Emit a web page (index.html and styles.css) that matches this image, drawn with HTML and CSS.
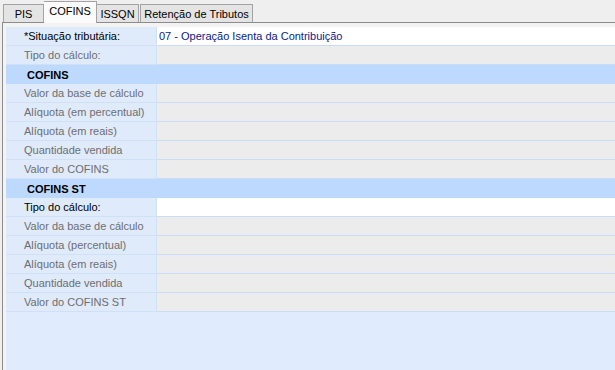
FILE: index.html
```html
<!DOCTYPE html>
<html>
<head>
<meta charset="utf-8">
<link rel="stylesheet" href="styles.css">
</head>
<body>
<div class="tabs">
  <div class="tab t-pis">PIS</div>
  <div class="tab t-cofins active">COFINS</div>
  <div class="tab t-issqn">ISSQN</div>
  <div class="tab t-ret">Retenção de Tributos</div>
</div>
<div class="panel">
  <div class="grid">
    <div class="lbl req">*Situação tributária:</div><div class="val edit">07 - Operação Isenta da Contribuição</div>
    <div class="lbl">Tipo do cálculo:</div><div class="val"></div>
    <div class="hdr">COFINS</div>
    <div class="lbl">Valor da base de cálculo</div><div class="val"></div>
    <div class="lbl">Alíquota (em percentual)</div><div class="val"></div>
    <div class="lbl">Alíquota (em reais)</div><div class="val"></div>
    <div class="lbl">Quantidade vendida</div><div class="val"></div>
    <div class="lbl">Valor do COFINS</div><div class="val"></div>
    <div class="hdr">COFINS ST</div>
    <div class="lbl req">Tipo do cálculo:</div><div class="val edit"></div>
    <div class="lbl">Valor da base de cálculo</div><div class="val"></div>
    <div class="lbl">Alíquota (percentual)</div><div class="val"></div>
    <div class="lbl">Alíquota (em reais)</div><div class="val"></div>
    <div class="lbl">Quantidade vendida</div><div class="val"></div>
    <div class="lbl">Valor do COFINS ST</div><div class="val"></div>
  </div>
</div>
</body>
</html>
```
FILE: styles.css
```css
html, body {
  margin: 0;
  padding: 0;
  height: 100%;
}
body {
  background: #efefef;
  font-family: "Liberation Sans", Arial, sans-serif;
  font-size: 11px;
  overflow: hidden;
}
.tabs {
  display: flex;
  align-items: flex-end;
  height: 22px;
  padding-left: 3px;
}
.tab {
  box-sizing: border-box;
  height: 18px;
  line-height: 18px;
  border: 1px solid #a3a3a3;
  border-bottom: none;
  background: #e4e4e4;
  color: #000;
  text-align: center;
  white-space: nowrap;
}
.t-pis { width: 41px; }
.t-cofins { width: 53px; }
.t-issqn { width: 42px; border-left: none; }
.t-ret { width: 113px; margin-left: 1px; }
.tab.active {
  height: 22px;
  line-height: 19px;
  margin-bottom: -1px;
  background: #fbfbfb;
  position: relative;
  z-index: 1;
  border-left: none;
}
.panel {
  box-sizing: border-box;
  margin-left: 2px;
  border-top: 1px solid #8c8c8c;
  border-left: 1px solid #8c8c8c;
  padding: 4px 0 0 3px;
  height: calc(100vh - 22px);
  background: #f3f3f3;
  overflow: hidden;
}
.grid {
  display: grid;
  grid-template-columns: 151px 1fr;
  grid-auto-rows: 19px;
  background: #e0ecfd;
  height: 100%;
  align-content: start;
}
.lbl {
  box-sizing: border-box;
  background: #dfeafb;
  border-bottom: 1px solid #cfe0f7;
  border-right: 1px solid #cfe0f7;
  color: #6e6e6e;
  padding: 1px 0 0 18px;
  line-height: 17px;
  white-space: nowrap;
}
.lbl.req { color: #000; }
.val {
  box-sizing: border-box;
  background: #ececec;
  border-bottom: 1px solid #c9ddf7;
  padding: 1px 0 0 2px;
  line-height: 17px;
  color: #0a1a8c;
}
.val.edit { background: #ffffff; }
.hdr {
  box-sizing: border-box;
  grid-column: 1 / 3;
  background: #bdd9fe;
  font-weight: bold;
  padding: 1px 0 0 21px;
  line-height: 18px;
  color: #000;
}
```
